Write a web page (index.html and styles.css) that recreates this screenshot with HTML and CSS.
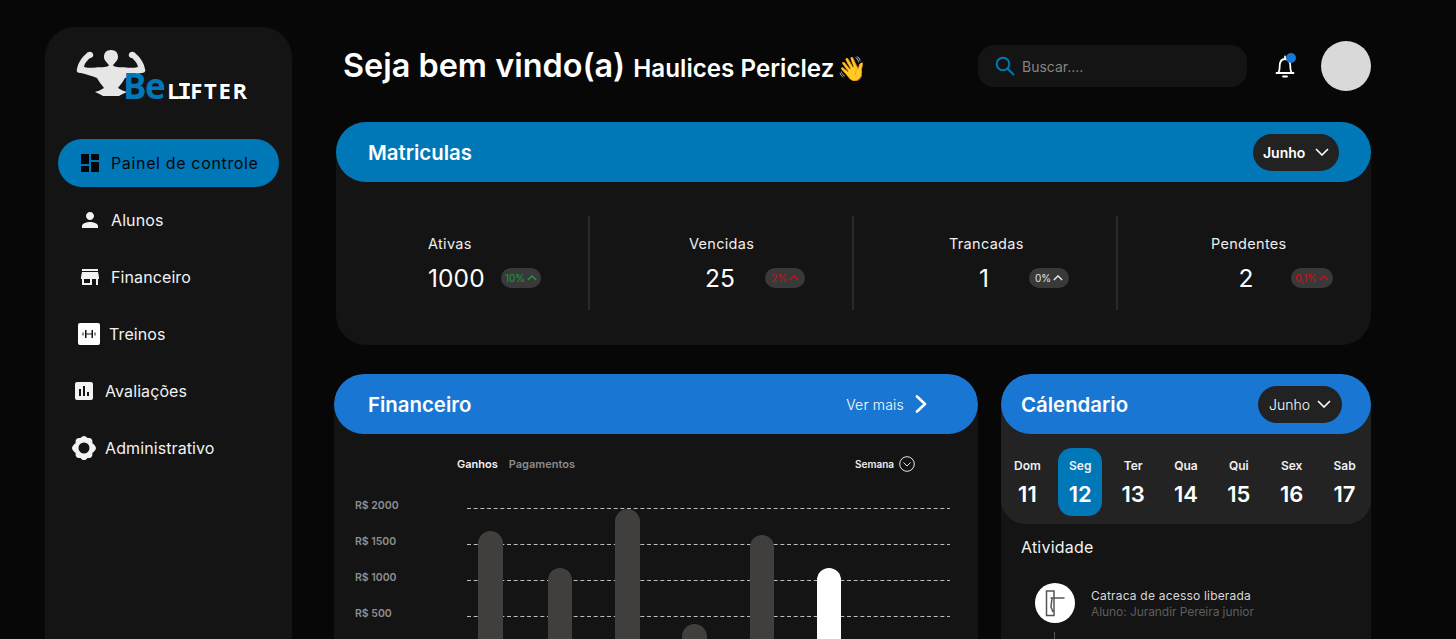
FILE: index.html
```html
<!DOCTYPE html>
<html lang="pt-BR">
<head>
<meta charset="utf-8">
<title>BeLifter</title>
<link rel="stylesheet" href="styles.css">
</head>
<body>
<div class="app">
  <aside class="sidebar">
    <div class="logo">
      <svg class="logo-figure" viewBox="76 48 72 52" aria-hidden="true">
        <path d="M111 50C106 50 104 53 104 57C104 61 108 63 109 65.500C106 68 100 67 96 67.500C92 68 88 68 84 67C85 62 88 60 90 58C92 58 94 56 93 54C92 51 88 51 86 54C82 57 78 63 77 69C76 72 78 73 81 73C86 74 92 76 97 78C99 82 102 85 104 88C101 90 98 91 95 92C98 93 101 95 103 96L119 96C121 95 124 93 127 92C124 91 121 90 118 88C120 85 123 82 125 78C130 76 136 74 141 73C144 73 146 72 145 69C144 63 140 57 136 54C134 51 130 51 129 54C128 56 130 58 132 58C134 60 137 62 138 67C134 68 130 68 126 67.500C122 67 116 68 113 65.500C114 63 118 61 118 57C118 53 116 50 111 50Z"/>
      </svg>
      <div class="logo-word"><span class="logo-be">Be</span><span class="logo-lifter">L<span class="logo-i">I</span>FTER</span></div>
    </div>
    <nav class="nav">
      <a class="nav-item active"><svg class="ico" viewBox="0 0 24 24"><path d="M3 13h8V3H3v10zm0 8h8v-6H3v6zm10 0h8V11h-8v10zm0-18v6h8V3h-8z"/></svg><span class="nav-main">Painel de controle</span></a>
      <a class="nav-item"><svg class="ico" viewBox="0 0 24 24"><path d="M12 12c2.200 0 4-1.800 4-4s-1.800-4-4-4-4 1.800-4 4 1.800 4 4 4zm0 2c-2.700 0-8 1.300-8 4v2h16v-2c0-2.700-5.300-4-8-4z"/></svg><span>Alunos</span></a>
      <a class="nav-item"><svg class="ico" viewBox="0 0 24 24"><path d="M20 4H4v2h16V4zm1 10v-2l-1-5H4l-1 5v2h1v6h10v-6h4v6h2v-6h1zm-9 4H6v-4h6v4z"/></svg><span>Financeiro</span></a>
      <a class="nav-item"><svg class="ico-gym" viewBox="0 0 22 22"><path fill-rule="evenodd" d="M2 0h18a2 2 0 0 1 2 2v18a2 2 0 0 1-2 2H2a2 2 0 0 1-2-2V2a2 2 0 0 1 2-2zM4.500 9.500h1v3h-1zM7 7h1.500v8H7zM8.500 10.600h5v.8h-5zM13.500 7H15v8h-1.500zM16.500 9.500h1v3h-1z"/></svg><span>Treinos</span></a>
      <a class="nav-item inset"><svg class="ico" viewBox="0 0 24 24"><path d="M19 3H5c-1.100 0-2 .9-2 2v14c0 1.100.9 2 2 2h14c1.100 0 2-.9 2-2V5c0-1.100-.9-2-2-2zM9 17H7v-7h2v7zm4 0h-2V7h2v10zm4 0h-2v-4h2v4z"/></svg><span>Avaliações</span></a>
      <a class="nav-item inset"><svg class="ico" viewBox="0 0 24 24"><path fill-rule="evenodd" d="M12 0c1.500 0 2.600 1 3.500 2.100 1.400-.2 2.900-.3 4 .8s1 2.600.8 4C21.500 7.700 24 10.300 24 12s-2.500 4.300-3.700 5.100c.2 1.400.3 2.900-.8 4s-2.600 1-4 .8C14.600 23 13.500 24 12 24s-2.600-1-3.500-2.100c-1.400.2-2.900.3-4-.8s-1-2.600-.8-4C2.500 16.300 0 13.700 0 12s2.500-4.300 3.700-5.100c-.2-1.400-.3-2.900.8-4s2.600-1 4-.8C9.400 1 10.500 0 12 0zm0 6.500a5.500 5.500 0 1 0 0 11 5.500 5.500 0 0 0 0-11z"/></svg><span>Administrativo</span></a>
    </nav>
  </aside>

  <main class="main">
    <header class="topbar">
      <h1 class="welcome">Seja bem vindo(a) <span class="welcome-name">Haulices Periclez</span> <span class="welcome-wave">👋</span></h1>
      <div class="top-actions">
        <div class="search">
          <svg class="search-ico" viewBox="0 0 20 20"><circle cx="8" cy="8" r="6.300"/><path d="M12.700 12.700 19 19"/></svg>
          <span>Buscar....</span>
        </div>
        <div class="bell">
          <svg viewBox="0 0 20 24"><path d="M1.500 19h17M3.500 18.500c.9-1.500 1.200-3.500 1.200-6C4.700 8 6.500 5 10 5s5.300 3 5.300 7.500c0 2.500.3 4.500 1.200 6M10 2.500V5M8 22.500h4"/></svg>
          <i class="bell-dot"></i>
        </div>
        <div class="avatar"></div>
      </div>
    </header>

    <section class="card enroll">
      <div class="card-head teal">
        <h2>Matriculas</h2>
        <div class="pill pill-bold">Junho <svg class="chev" viewBox="0 0 14 8"><path d="M1 1l6 6 6-6"/></svg></div>
      </div>
      <div class="stats">
        <div class="stat s1">
          <div class="stat-label">Ativas</div>
          <div class="stat-row"><span class="stat-value">1000</span><span class="badge green">10%<svg viewBox="0 0 12 7"><path d="M1 6l5-5 5 5"/></svg></span></div>
        </div>
        <div class="stat s2">
          <div class="stat-label">Vencidas</div>
          <div class="stat-row"><span class="stat-value">25</span><span class="badge red">2%<svg viewBox="0 0 12 7"><path d="M1 6l5-5 5 5"/></svg></span></div>
        </div>
        <div class="stat s3">
          <div class="stat-label">Trancadas</div>
          <div class="stat-row"><span class="stat-value">1</span><span class="badge grey">0%<svg viewBox="0 0 12 7"><path d="M1 6l5-5 5 5"/></svg></span></div>
        </div>
        <div class="stat s4">
          <div class="stat-label">Pendentes</div>
          <div class="stat-row"><span class="stat-value">2</span><span class="badge red">0,1%<svg viewBox="0 0 12 7"><path d="M1 6l5-5 5 5"/></svg></span></div>
        </div>
      </div>
    </section>

    <div class="bottom">
      <section class="card finance">
        <div class="card-head blue">
          <h2>Financeiro</h2>
          <a class="more">Ver mais <svg viewBox="0 0 12 18"><path d="M2 1.500 10 9l-8 7.500"/></svg></a>
        </div>
        <div class="tabs">
          <div class="tab-group"><span class="tab-on">Ganhos</span><span class="tab-off">Pagamentos</span></div>
          <div class="week">Semana <svg viewBox="0 0 16 16"><circle cx="8" cy="8" r="7.300"/><path d="M4.500 6.500 8 10l3.500-3.500"/></svg></div>
        </div>
        <div class="chart">
          <div class="axis"><span>R$ 2000</span><span>R$ 1500</span><span>R$ 1000</span><span>R$ 500</span></div>
          <svg class="plot" viewBox="467 499 483 140">
            <g class="grid-lines">
              <path d="M467 508.500H950M467 544.500H950M467 580.500H950M467 616.500H950"/>
            </g>
            <g class="bars">
              <rect x="478" y="531" width="25" height="170" rx="12.500"/>
              <rect x="548" y="568" width="24" height="130" rx="12"/>
              <rect x="615" y="509" width="25" height="190" rx="12.500"/>
              <rect x="682" y="624" width="25" height="70" rx="12.500"/>
              <rect x="750" y="535" width="24" height="165" rx="12"/>
              <rect class="bar-on" x="817" y="568" width="24" height="130" rx="12"/>
            </g>
          </svg>
        </div>
      </section>

      <section class="card calendar">
        <div class="cal-top">
          <div class="card-head blue cal-head">
            <h2>Cálendario</h2>
            <div class="pill pill-light">Junho <svg class="chev" viewBox="0 0 14 8"><path d="M1 1l6 6 6-6"/></svg></div>
          </div>
          <div class="days">
            <div class="day"><span>Dom</span><b>11</b></div>
            <div class="day on"><span>Seg</span><b>12</b></div>
            <div class="day"><span>Ter</span><b>13</b></div>
            <div class="day"><span>Qua</span><b>14</b></div>
            <div class="day"><span>Qui</span><b>15</b></div>
            <div class="day"><span>Sex</span><b>16</b></div>
            <div class="day"><span>Sab</span><b>17</b></div>
          </div>
        </div>
        <div class="activity">
          <h3>Atividade</h3>
          <div class="event">
            <div class="event-ico">
              <svg viewBox="0 0 40 40"><path class="door" d="M11.500 8h7.500v24.500h-7.500zM15.500 15h14M17 15l-1 9 2 5"/></svg>
            </div>
            <div class="event-text">
              <div class="event-title">Catraca de acesso liberada</div>
              <div class="event-sub">Aluno: Jurandir Pereira junior</div>
            </div>
          </div>
          <div class="event-line"></div>
        </div>
      </section>
    </div>
  </main>
</div>
</body>
</html>
```

FILE: styles.css
```css
* { box-sizing: border-box; }
html, body { margin: 0; height: 639px; overflow: hidden; }
body { background: #070707; color: #fff; font-family: Inter, "Liberation Sans", sans-serif; }
h1, h2, h3 { margin: 0; }
svg { display: block; }

.app { display: flex; align-items: flex-start; height: 639px; overflow: hidden; padding-left: 45px; }

/* sidebar */
.sidebar { width: 247px; height: 612px; margin-top: 27px; background: #141414; border-radius: 30px 30px 0 0; padding: 21px 13px 0; flex: none; }
.logo { position: relative; height: 56px; margin-left: 18px; width: 175px; }
.logo-figure { width: 72px; height: 52px; fill: #e6e6e6; }
.logo-word { position: absolute; left: 47px; top: 18px; display: flex; align-items: baseline; white-space: nowrap; }
.logo-be { font-family: "Open Sans", sans-serif; font-weight: 700; font-size: 35px; line-height: 40px; color: #0077b6; letter-spacing: -1.500px; }
.logo-lifter { font-family: "Open Sans", sans-serif; font-weight: 700; font-size: 22px; line-height: 22px; color: #fff; letter-spacing: 1.700px; margin-left: 3px; }
.logo-i { position: relative; display: inline-block; }
.logo-i::before, .logo-i::after { content: ""; position: absolute; left: -2px; right: 0; height: 3px; background: #fff; border-radius: 1px; }
.logo-i::before { top: 4px; }
.logo-i::after { bottom: 2px; }

.nav { margin-top: 35px; display: flex; flex-direction: column; gap: 9px; }
.nav-item { display: flex; align-items: center; gap: 9px; height: 48px; padding-left: 20px; border-radius: 24px; font-size: 16px; letter-spacing: .1px; color: #f2f2f2; }
.nav-item.inset { padding-left: 14px; }
.nav-item.active { background: #0077b6; color: #020608; }
.nav-main { letter-spacing: .65px; }
.ico { width: 24px; height: 24px; fill: currentColor; flex: none; }
.ico-gym { width: 22px; height: 22px; fill: #fff; flex: none; }

/* main */
.main { width: 1037px; margin-left: 42px; padding-top: 41px; flex: none; }
.topbar { display: flex; justify-content: space-between; align-items: center; height: 50px; margin-bottom: 31px; padding-left: 9px; }
.welcome { font-size: 32.400px; font-weight: 600; line-height: 50px; margin-top: 3px; white-space: nowrap; }
.welcome-name { font-size: 24.200px; }
.welcome-wave { font-size: 24px; font-weight: 400; margin-left: -6px; }
.top-actions { display: flex; align-items: center; }
.search { width: 269px; height: 42px; background: #141414; border-radius: 16px; display: flex; align-items: center; gap: 7px; padding-left: 17px; font-size: 14px; color: #858585; }
.search-ico { width: 20px; height: 20px; fill: none; stroke: #0077b6; stroke-width: 2; }
.bell { position: relative; margin-left: 28px; width: 20px; height: 24px; }
.bell svg { width: 20px; height: 24px; fill: none; stroke: #fff; stroke-width: 1.800; stroke-linecap: round; }
.bell-dot { position: absolute; top: -1px; right: -1px; width: 10px; height: 10px; border-radius: 50%; background: #1976d2; }
.avatar { width: 50px; height: 50px; margin-left: 26px; border-radius: 50%; background: #d9d9d9; }

.card { background: #141414; border-radius: 30px; }
.card-head { height: 60px; border-radius: 30px; display: flex; align-items: center; justify-content: space-between; }
.card-head h2 { font-size: 20.400px; font-weight: 600; }
.teal { background: #0077b6; padding: 0 32px; }
.blue { background: #1976d2; padding: 0 47px 0 34px; }
.pill { height: 37px; border-radius: 19px; background: #222; display: flex; align-items: center; justify-content: space-between; font-size: 14px; }
.pill-bold { width: 86px; padding: 0 10px; font-weight: 600; }
.pill-light { width: 84px; padding: 0 11px; font-weight: 300; }
.chev { width: 14px; height: 8px; fill: none; stroke: #fff; stroke-width: 1.600; }

/* stats */
.enroll { margin-left: 2px; height: 223px; margin-bottom: 29px; }
.stats { display: flex; padding-top: 34px; }
.stat { height: 94px; padding-top: 19px; border-right: 2px solid #2a2a2a; width: 264px; flex: none; }
.stat.s1 { width: 254px; }
.stat.s4 { width: 253px; border-right: 0; }
.stat-label { font-size: 14.500px; line-height: 18px; letter-spacing: .3px; color: #eee; }
.stat-row { display: flex; align-items: center; height: 34px; margin-top: 8px; }
.stat-value { width: 80px; text-align: center; font-size: 24.500px; letter-spacing: .1px; flex: none; }
.s1 .stat-label { padding-left: 92px; }
.s1 .stat-row { padding-left: 88px; }
.s1 .stat-value { width: 77px; text-align: left; padding-left: 4px; }
.s2 .stat-label { padding-left: 99px; }
.s2 .stat-row { padding-left: 90px; }
.s2 .badge { margin-left: 5px; }
.s3 .stat-label { padding-left: 95px; }
.s3 .stat-row { padding-left: 90px; }
.s3 .badge { margin-left: 5px; }
.s4 .stat-label { padding-left: 93px; }
.s4 .stat-row { padding-left: 88px; }
.s4 .badge { margin-left: 5px; width: 42px; }
.badge { width: 40px; height: 20px; border-radius: 10px; background: #393939; display: flex; align-items: center; justify-content: center; gap: 2px; font-size: 10px; letter-spacing: -.1px; }
.badge svg { width: 10px; height: 6px; fill: none; stroke: currentColor; stroke-width: 1.700; }
.green { color: #1c9a3c; }
.red { color: #d40d12; }
.grey { color: #e6e6e6; }

/* finance */
.bottom { display: flex; gap: 23px; align-items: flex-start; }
.finance { width: 644px; height: 265px; border-radius: 30px 30px 0 0; overflow: hidden; }
.more { display: flex; align-items: center; gap: 11px; font-size: 14px; font-weight: 300; letter-spacing: .2px; margin-right: 4px; }
.more svg { width: 12px; height: 18px; fill: none; stroke: #fff; stroke-width: 2.600; stroke-linecap: round; stroke-linejoin: round; }
.tabs { display: flex; justify-content: space-between; align-items: center; height: 16px; margin-top: 22px; padding: 0 63px 0 123px; }
.tab-group { display: flex; gap: 11px; font-size: 11px; font-weight: 600; }
.tab-on { color: #f5f5f5; }
.tab-off { color: #8a8a8a; }
.week { display: flex; align-items: center; gap: 5px; font-size: 10px; font-weight: 600; color: #eee; }
.week svg { width: 16px; height: 16px; fill: none; stroke: #fff; stroke-width: .9; }
.chart { display: flex; margin-top: 27px; padding-left: 21px; }
.axis { width: 112px; display: flex; flex-direction: column; gap: 24px; padding-top: 1px; font-size: 10.500px; line-height: 12px; font-weight: 600; color: #8e8e8e; flex: none; }
.plot { width: 483px; height: 140px; flex: none; }
.grid-lines path { fill: none; stroke: #bdbdbd; stroke-width: 1; stroke-dasharray: 4 2.667; }
.bars rect { fill: #403f3d; }
.bars .bar-on { fill: #fff; }

/* calendar */
.calendar { width: 370px; height: 265px; border-radius: 30px 30px 0 0; overflow: hidden; }
.cal-top { background: #232323; border-radius: 30px 30px 24px 24px; height: 150px; }
.cal-head { padding: 0 29px 0 20px; }
.days { display: grid; grid-template-columns: repeat(7, 1fr); margin-top: 14px; }
.day { height: 68px; width: 44px; justify-self: center; border-radius: 14px; display: flex; flex-direction: column; align-items: center; padding-top: 10px; }
.day span { font-size: 12px; line-height: 15px; font-weight: 600; color: #f0f0f0; }
.day b { font-size: 22px; line-height: 26px; font-weight: 600; margin-top: 8px; }
.day.on { background: #0077b6; }
.activity { padding: 13px 0 0 20px; }
.activity h3 { font-size: 16px; line-height: 20px; font-weight: 400; color: #f2f2f2; letter-spacing: .2px; }
.event { display: flex; align-items: center; gap: 16px; margin: 26px 0 0 14px; }
.event-ico { width: 40px; height: 40px; border-radius: 50%; background: #fff; flex: none; }
.event-ico svg { width: 40px; height: 40px; }
.door { fill: none; stroke: #555; stroke-width: 1.500; }
.event-text { font-size: 12px; line-height: 16px; letter-spacing: .2px; padding-top: 2px; }
.event-title { color: #d8d8d8; }
.event-sub { color: #5e5e5e; letter-spacing: -.07px; }
.event-line { width: 1px; height: 7px; background: #555; margin: 9px 0 0 33px; }
```
